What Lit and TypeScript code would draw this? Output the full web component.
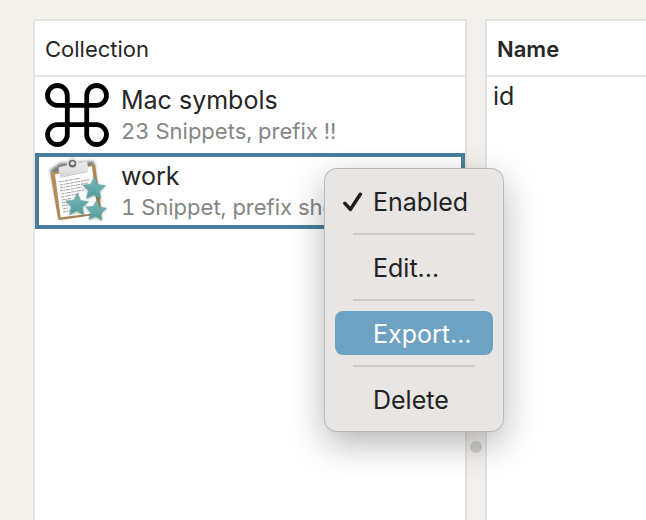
import { LitElement, html, css, svg } from "lit";
import { customElement } from "lit/decorators.js";

const starPoints = (cx: number, cy: number, r: number, turn: number) =>
  Array.from({ length: 10 }, (_, i) => {
    const a = ((turn - 90 + i * 36) * Math.PI) / 180;
    const d = i % 2 ? r * 0.48 : r;
    return `${(cx + d * Math.cos(a)).toFixed(1)},${(cy + d * Math.sin(a)).toFixed(1)}`;
  }).join(" ");

const stars = [
  [49, 32, 12, 2],
  [32, 48, 12, 2],
  [51, 54, 11, 4],
];

// Lines of writing on the clipboard page: x, y, length.
const writing = [
  [14, 25, 20], [15, 28, 29], [15, 31, 28], [15, 34, 22], [16, 37, 23],
  [16, 40, 18], [17, 43, 9], [17, 46, 8], [17, 49, 6], [18, 52, 5], [18, 55, 8],
];

const commandIcon = html`<svg class="icon" viewBox="0 0 64 64" aria-hidden="true">
  <path fill="none" stroke="#000" stroke-width="4.8"
    d="M22.3 12.4a9.9 9.9 0 1 0-9.9 9.9h39.2a9.9 9.9 0 1 0-9.9-9.9v39.2a9.9 9.9 0 1 0 9.9-9.9H12.4a9.9 9.9 0 1 0 9.9 9.9z" />
</svg>`;

const clipboardIcon = html`<svg class="icon" viewBox="0 2 64 64" aria-hidden="true">
  <defs>
    <filter id="soft" x="-20%" y="-20%" width="140%" height="140%"><feGaussianBlur stdDeviation="1.6" /></filter>
    <linearGradient id="board" x1="0" y1="0" x2="1" y2="1"><stop stop-color="#bd935b" /><stop offset="1" stop-color="#a17c4d" /></linearGradient>
    <linearGradient id="clip" x1="0" y1="0" x2="0" y2="1"><stop stop-color="#ececec" /><stop offset=".7" stop-color="#e2e2e2" /><stop offset="1" stop-color="#d0d0d0" /></linearGradient>
    <linearGradient id="star" x1="0" y1="0" x2="0" y2="1"><stop stop-color="#78b9b8" /><stop offset="1" stop-color="#529c9c" /></linearGradient>
  </defs>
  <path d="M5 13 15 6l34-2 7 50-41 8z" fill="#000" opacity=".5" filter="url(#soft)" />
  <path d="M7 15.500 48.500 7.500q1.500 0 1.700 1.200l6.500 48.300-42 6q-1.500 0-1.700-1.400L5.700 17.500q0-1.500 1.300-2z" fill="url(#board)" />
  <path d="m10 17.500 36.800-8.500 6.200 47-37.300 4.300z" fill="#fdfdfd" />
  ${writing.map(([x, y, w]) => svg`<path d=${`M${x} ${y}l${w}-${(w * 0.18).toFixed(1)}`}
      stroke="#444" stroke-width="1" stroke-dasharray="3 .7 1.500 .6 4 .8" opacity=".5" />`)}
  <path d="m14 20 28-6 1 1-28 6z" fill="#000" opacity=".2" />
  <path d="M13.500 11.500q0-1.200 1.200-1.400l7.300-1.800q0-2-.3-4 .8-4.300 5.300-4.600 4.500 0 5.700 4.300l1.300 1.700 7-1.500q1.200 0 1.400 1l.8 8.500L15 19.800z" fill="url(#clip)" />
  <circle cx="27.400" cy="6.600" r="3.900" fill="#6c6c6c" />
  <circle cx="27.500" cy="6.200" r="2" fill="#dedede" />
  ${stars.map(([x, y, r, t]) => svg`<polygon points=${starPoints(x, y + 1, r, t)} fill="#000" opacity=".35" filter="url(#soft)" />
    <polygon points=${starPoints(x, y, r, t)} fill="url(#star)" stroke="#5ca3a3" stroke-width=".5" />`)}
</svg>`;

const check = html`<svg class="check" viewBox="0 0 20 20" aria-hidden="true">
  <path d="M1.900 11.300 7.400 17.400 17.300 2.300" fill="none" stroke="#1e1e1e" stroke-width="3.500" stroke-linecap="round" stroke-linejoin="round" />
</svg>`;

@customElement("app-root")
export class AppRoot extends LitElement {
  static styles = css`
    :host {
      display: grid;
      grid-template-columns: minmax(0, 434fr) 18px minmax(0, 161fr);
      box-sizing: border-box;
      min-height: 100vh;
      padding: 19px 0 0 33px;
      overflow: hidden;
      background: #f4f1ec;
      color: #262626;
      font-family: Inter, "Liberation Sans", sans-serif;
      font-size: 25px;
      line-height: 32px;
    }
    .panel {
      background: #fff;
      border: 2px solid #e3e3e2;
      border-bottom: 0;
    }
    .names {
      border-right: 0;
    }
    .title,
    th {
      margin: 0;
      padding: 12px 10px 10px;
      border-bottom: 2px solid #e5e5e5;
      font-size: 22px;
      font-weight: 400;
      line-height: 32px;
      text-align: left;
    }
    th {
      font-weight: 600;
    }
    ul {
      margin: 0;
      padding: 0;
      list-style: none;
    }
    li {
      position: relative;
    }
    .row {
      display: flex;
      gap: 12px;
      box-sizing: border-box;
      width: 100%;
      height: 76px;
      padding: 2px 6px;
      border: 4px solid transparent;
      background: none;
      color: inherit;
      font: inherit;
      text-align: left;
      white-space: nowrap;
      overflow: hidden;
    }
    .row.selected {
      border-color: #4a7f9c;
    }
    .icon {
      flex: none;
      width: 64px;
      height: 64px;
      overflow: visible;
    }
    .label,
    .detail {
      display: block;
    }
    .label {
      line-height: 34px;
    }
    .detail {
      color: #858585;
      font-size: 22px;
      font-variant-numeric: tabular-nums;
      line-height: 28px;
    }
    .splitter {
      display: flex;
      flex-direction: column;
      justify-content: flex-end;
      align-items: center;
      padding-bottom: 67px;
    }
    .grip {
      width: 12px;
      height: 12px;
      border-radius: 50%;
      background: #d5d1cd;
    }
    table {
      width: 100%;
      border-collapse: separate;
      border-spacing: 0;
    }
    td {
      padding: 3px 6px;
    }
    .menu {
      position: absolute;
      z-index: 1;
      top: 16px;
      right: -38px;
      box-sizing: border-box;
      width: 178px;
      padding: 10px;
      border-radius: 12px;
      background: #e9e5e2;
      box-shadow: 0 0 0 1px #bbb9b8, 0 12px 36px rgba(0, 0, 0, 0.3);
    }
    .item {
      display: flex;
      align-items: center;
      width: 100%;
      height: 44px;
      padding: 2px 8px 0;
      border: 0;
      border-radius: 8px;
      background: none;
      color: #222;
      font: inherit;
      white-space: nowrap;
    }
    .item.active {
      background: #6ea2c2;
      color: #fff;
    }
    .mark {
      display: flex;
      flex: none;
      width: 30px;
    }
    .check {
      width: 20px;
      height: 20px;
    }
    hr {
      height: 2px;
      margin: 10px 18px;
      border: 0;
      background: #cfcbc8;
    }
  `;

  private item(text: string, mark: unknown = "", active = false) {
    return html`<button class="item ${active ? "active" : ""}" role="menuitem">
      <span class="mark">${mark}</span>${text}
    </button>`;
  }

  render() {
    return html`
      <section class="panel">
        <h2 class="title">Collection</h2>
        <ul>
          <li>
            <button class="row">
              ${commandIcon}
              <span><span class="label">Mac symbols</span><span class="detail">23 Snippets, prefix !!</span></span>
            </button>
          </li>
          <li>
            <button class="row selected">
              ${clipboardIcon}
              <span><span class="label">work</span><span class="detail">1 Snippet, prefix shell</span></span>
            </button>
            <div class="menu" role="menu">
              ${this.item("Enabled", check)}
              <hr />
              ${this.item("Edit...")}
              <hr />
              ${this.item("Export...", "", true)}
              <hr />
              ${this.item("Delete")}
            </div>
          </li>
        </ul>
      </section>
      <div class="splitter"><span class="grip"></span></div>
      <section class="panel names">
        <table>
          <thead><tr><th>Name</th></tr></thead>
          <tbody><tr><td>id</td></tr></tbody>
        </table>
      </section>
    `;
  }
}
